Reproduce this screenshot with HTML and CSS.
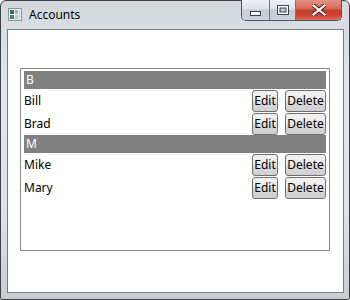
FILE: index.html
```html
<!DOCTYPE html>
<html>
<head>
<meta charset="utf-8">
<link rel="stylesheet" href="styles.css">
</head>
<body>
<div class="window">
  <div class="titlebar">
    <svg class="app-icon" width="14" height="13" viewBox="0 0 14 13">
      <rect x="0.5" y="0.5" width="13" height="12" fill="#e8ecef" stroke="#8a9298"/>
      <rect x="2" y="2" width="4" height="4" fill="#2f6f5c"/>
      <rect x="2" y="7" width="4" height="4" fill="#3b8a70"/>
      <rect x="7" y="2" width="3" height="4" fill="#9fb8ae"/>
      <rect x="7" y="7" width="3" height="4" fill="#b5c9c1"/>
      <rect x="11" y="2" width="1" height="9" fill="#c9d4cf"/>
    </svg>
    <span class="title">Accounts</span>
    <div class="caption-buttons">
      <div class="cap cap-min">
        <svg width="11" height="5" viewBox="0 0 11 5"><rect x="0.5" y="0.5" width="10" height="4" fill="#fff" stroke="#3a4250"/></svg>
      </div>
      <div class="cap cap-max">
        <svg width="12" height="10" viewBox="0 0 12 10"><rect x="0.5" y="0.5" width="11" height="9" fill="#fff" stroke="#3a4250"/><rect x="3" y="3" width="6" height="4" fill="#b9c2cd" stroke="#3a4250" stroke-width="1"/></svg>
      </div>
      <div class="cap cap-close">
        <svg width="14" height="12" viewBox="0 0 14 12"><path d="M1 1 L13 11 M13 1 L1 11" stroke="#5a1e18" stroke-width="4.2" stroke-linecap="square"/><path d="M1.5 1.5 L12.5 10.5 M12.5 1.5 L1.5 10.5" stroke="#fff" stroke-width="2.2" stroke-linecap="square"/></svg>
      </div>
    </div>
  </div>
  <div class="client">
    <div class="listbox">
      <div class="group-header">B</div>
      <div class="item">
        <span class="name">Bill</span>
        <span class="actions"><button class="btn btn-edit">Edit</button><button class="btn btn-delete">Delete</button></span>
      </div>
      <div class="item">
        <span class="name">Brad</span>
        <span class="actions"><button class="btn btn-edit">Edit</button><button class="btn btn-delete">Delete</button></span>
      </div>
      <div class="group-header">M</div>
      <div class="item">
        <span class="name">Mike</span>
        <span class="actions"><button class="btn btn-edit">Edit</button><button class="btn btn-delete">Delete</button></span>
      </div>
      <div class="item">
        <span class="name">Mary</span>
        <span class="actions"><button class="btn btn-edit">Edit</button><button class="btn btn-delete">Delete</button></span>
      </div>
    </div>
  </div>
</div>
</body>
</html>
```
FILE: styles.css
```css
html, body {
  margin: 0;
  padding: 0;
  background: #ffffff;
}
body {
  width: 350px;
  height: 300px;
  overflow: hidden;
  font-family: "Noto Sans", "Open Sans", sans-serif;
  font-size: 12px;
}
.window {
  box-sizing: border-box;
  width: 350px;
  height: 300px;
  border: 1px solid #3e4246;
  border-radius: 6px 6px 2px 2px;
  background: linear-gradient(to bottom, #d3d9df 0%, #e2e6ea 30%, #dfe3e7 70%, #c9cdd1 100%);
  display: flex;
  flex-direction: column;
}
.titlebar {
  height: 28px;
  display: flex;
  align-items: flex-start;
  padding-left: 7px;
  flex-shrink: 0;
}
.app-icon {
  margin-top: 7px;
  display: block;
}
.title {
  margin-left: 7px;
  margin-top: 6px;
  line-height: 16px;
  color: #000;
  font-size: 12px;
}
.caption-buttons {
  margin-left: auto;
  margin-right: 7px;
  margin-top: -1px;
  display: flex;
  height: 20px;
  border: 1px solid #4c5563;
  border-top: none;
  border-radius: 0 0 5px 5px;
  overflow: hidden;
}
.cap {
  display: flex;
  align-items: center;
  justify-content: center;
  height: 20px;
}
.cap-min {
  width: 27px;
  border-right: 1px solid #6f7886;
  background: linear-gradient(to bottom, #eef1f5 0%, #dde3ea 45%, #c3ccd7 50%, #cdd5df 100%);
  align-items: flex-end;
}
.cap-min svg {
  margin-bottom: 4px;
}
.cap-max {
  width: 25px;
  border-right: 1px solid #6f7886;
  background: linear-gradient(to bottom, #eef1f5 0%, #dde3ea 45%, #c3ccd7 50%, #cdd5df 100%);
}
.cap-close {
  width: 45px;
  background: linear-gradient(to bottom, #e39485 0%, #d86a58 45%, #c43a28 50%, #cc4a36 80%, #de6f59 100%);
}
.client {
  flex: 1;
  margin: 0 5px 6px 6px;
  border: 1px solid #787d84;
  background: #ffffff;
  padding: 38px 13px 41px 12px;
  display: flex;
  flex-direction: column;
}
.listbox {
  flex: 1;
  border: 1px solid #828790;
  padding: 2px 3px 0 3px;
  display: flex;
  flex-direction: column;
}
.group-header {
  height: 18px;
  line-height: 18px;
  background: #808080;
  color: #ffffff;
  padding-left: 2px;
  font-size: 12px;
}
.item {
  height: 23px;
  display: flex;
  align-items: center;
}
.name {
  color: #000;
  font-size: 12px;
  flex: 1;
}
.actions {
  display: flex;
  gap: 7px;
  align-self: flex-end;
}
.btn {
  box-sizing: border-box;
  height: 22px;
  border: 1px solid #707070;
  border-radius: 3px;
  background: linear-gradient(to bottom, #f2f2f2 0%, #ebebeb 50%, #dddddd 50%, #cfcfcf 100%);
  font-family: "Noto Sans", "Open Sans", sans-serif;
  font-size: 12px;
  color: #000;
  padding: 0 1px;
  margin: 0;
  line-height: 18px;
}
.btn-edit {
  width: 26px;
}
.btn-delete {
  width: 41px;
}
```
